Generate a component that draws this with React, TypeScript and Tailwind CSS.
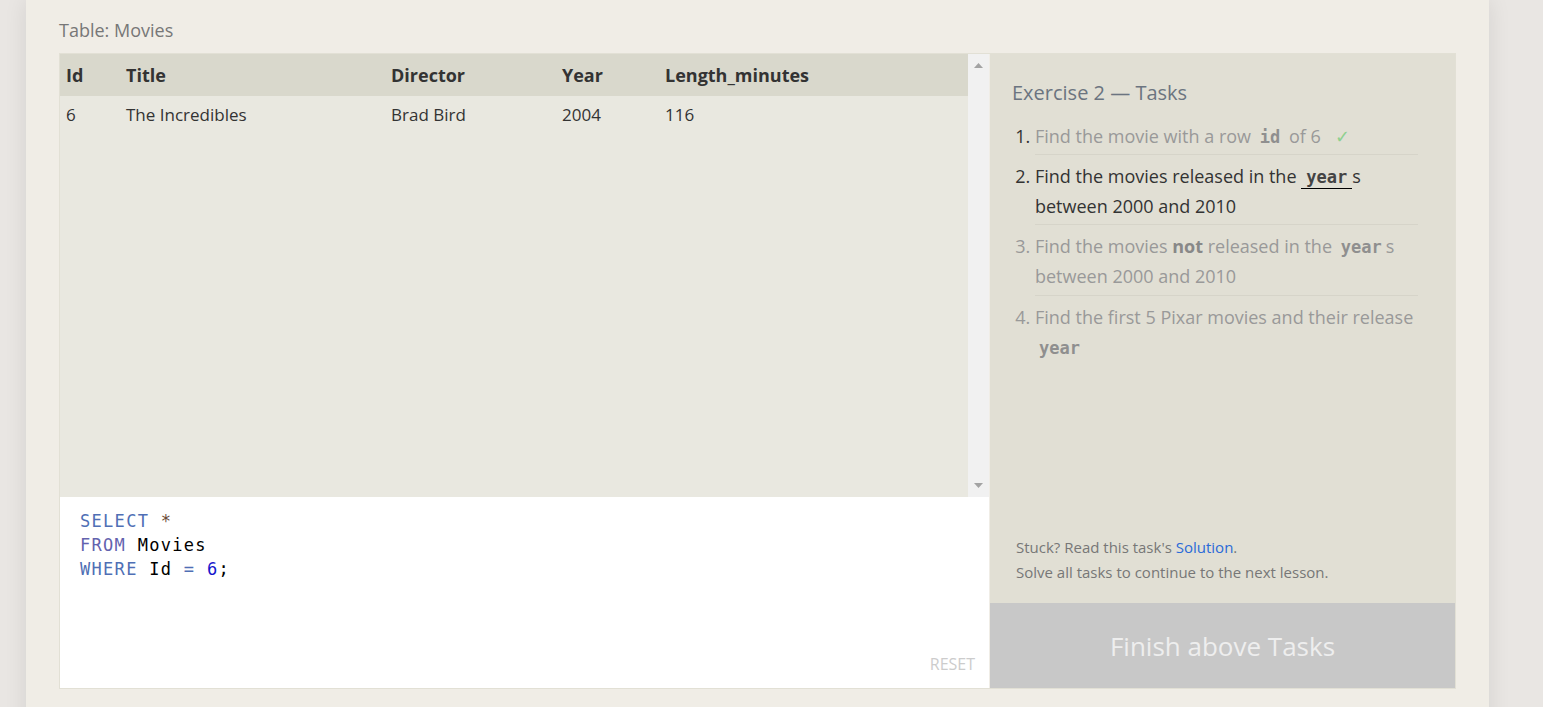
export default function App() {
  const cols = [
    { name: "Id", w: "w-[60px]" },
    { name: "Title", w: "w-[265px]" },
    { name: "Director", w: "w-[171px]" },
    { name: "Year", w: "w-[103px]" },
    { name: "Length_minutes", w: "flex-1" },
  ];
  const row = ["6", "The Incredibles", "Brad Bird", "2004", "116"];

  return (
    <div className="h-[707px] overflow-hidden bg-[#e9e6e3] font-['Open_Sans',sans-serif]">
      <div className="ml-[26px] w-[1463px] h-[760px] bg-[#f0ede6] shadow-[0_0_22px_rgba(0,0,0,0.09)] px-[33px] pt-[18px]">
        <div className="text-[18px] leading-[24px] text-[#777]">Table: Movies</div>

        <div className="mt-[11px] flex border border-[#e2e0d5]">
          {/* left: results + editor */}
          <div className="w-[929px] flex flex-col">
            <div className="h-[443px] flex bg-[#e9e8e0]">
              <div className="flex-1">
                <div className="h-[42px] flex items-center pt-[1px] bg-[#d9d8cc] text-[18px] font-bold text-[#333]">
                  {cols.map((c) => (
                    <div key={c.name} className={`${c.w} pl-[6px]`}>
                      {c.name}
                    </div>
                  ))}
                </div>
                <div className="h-[38px] flex items-center text-[17px] text-[#333]">
                  {row.map((v, i) => (
                    <div key={i} className={`${cols[i].w} pl-[6px]`}>
                      {v}
                    </div>
                  ))}
                </div>
              </div>
              <div className="w-[21px] bg-[#f1f1f1] flex flex-col items-center justify-between py-[9px]">
                <svg width="9" height="5" viewBox="0 0 9 5">
                  <polygon points="4.5,0 9,5 0,5" fill="#a3a3a3" />
                </svg>
                <svg width="9" height="5" viewBox="0 0 9 5">
                  <polygon points="0,0 9,0 4.5,5" fill="#a3a3a3" />
                </svg>
              </div>
            </div>
            <div className="h-[191px] bg-white relative pl-[20px] pt-[12px] font-['DejaVu_Sans_Mono',monospace] text-[17px] tracking-[1.3px] leading-[24px]">
              <div>
                <span className="text-[#4f6fb5]">SELECT</span> <span className="text-[#6b4a35]">*</span>
              </div>
              <div>
                <span className="text-[#6362ae]">FROM</span> <span className="text-black">Movies</span>
              </div>
              <div>
                <span className="text-[#4f6fb5]">WHERE</span> <span className="text-black">Id</span>{" "}
                <span className="text-[#4f6fb5]">=</span> <span className="text-[#1515cc]">6</span>
                <span className="text-black">;</span>
              </div>
              <div className="absolute right-[14px] bottom-[12px] font-['Open_Sans',sans-serif] tracking-normal text-[16px] text-[#ccc]">
                RESET
              </div>
            </div>
          </div>

          {/* right: tasks */}
          <div className="w-[465px] ml-px flex flex-col bg-[#e1dfd4]">
            <div className="flex-1 flex flex-col pl-[22px] pr-[37px] pt-[25px]">
              <div className="text-[20px] leading-[28px] text-[#6b7480]">Exercise 2 — Tasks</div>
              <ol className="mt-[8px] pl-[23px] list-decimal text-[18px] leading-[30px]">
                <li className="pt-[6px] pb-[3px] border-b border-[#d6d4c9] text-[#999] marker:text-[#333]">
                  Find the movie with a row{" "}
                  <code className="font-['DejaVu_Sans_Mono',monospace] font-bold text-[17px] leading-none text-[#8f8f8f] px-[4px]">
                    id
                  </code>{" "}
                  of 6 <span className="ml-[10px] text-[#8fd08f]">✓</span>
                </li>
                <li className="pt-[6px] pb-[3px] border-b border-[#d6d4c9] text-[#333]">
                  Find the movies released in the{" "}
                  <code className="inline-block leading-[22px] font-['DejaVu_Sans_Mono',monospace] font-bold text-[17px] text-[#444] px-[5px] border-b border-black">
                    year
                  </code>
                  s between 2000 and 2010
                </li>
                <li className="pt-[6px] pb-[4px] border-b border-[#d6d4c9] text-[#999]">
                  Find the movies <b className="text-[#888]">not</b> released in the{" "}
                  <code className="font-['DejaVu_Sans_Mono',monospace] font-bold text-[17px] leading-none text-[#8f8f8f] px-[4px]">
                    year
                  </code>
                  s between 2000 and 2010
                </li>
                <li className="pt-[6px] pb-[3px] text-[#999]">
                  Find the first 5 Pixar movies and their release{" "}
                  <code className="font-['DejaVu_Sans_Mono',monospace] font-bold text-[17px] leading-none text-[#8f8f8f] px-[4px]">
                    year
                  </code>
                </li>
              </ol>
              <div className="mt-auto pl-[4px] pb-[18px] text-[15px] leading-[25px] text-[#777]">
                <div>
                  Stuck? Read this task's <span className="text-[#2a6ad8]">Solution</span>.
                </div>
                <div>Solve all tasks to continue to the next lesson.</div>
              </div>
            </div>
            <div className="h-[85px] bg-[#c8c8c8] flex items-center justify-center pt-[2px] text-[26px] text-[#eeeeee]">
              Finish above Tasks
            </div>
          </div>
        </div>
      </div>
    </div>
  );
}
